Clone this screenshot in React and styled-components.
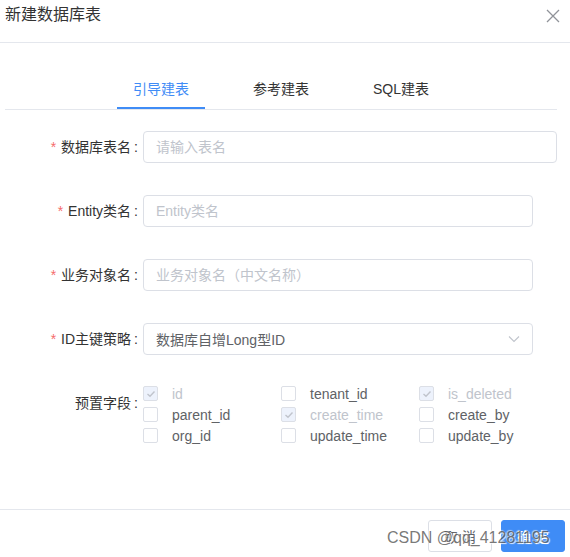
import styled, { createGlobalStyle } from "styled-components";

const GlobalStyle = createGlobalStyle`
  html, body {
    margin: 0;
    padding: 0;
    background: #fff;
  }
  body {
    font-family: "Liberation Sans", "Noto Sans CJK SC", sans-serif;
    color: #606266;
  }
  * { box-sizing: border-box; }
`;

const Dialog = styled.div`
  position: relative;
  width: 570px;
  height: 557px;
  display: flex;
  flex-direction: column;
  background: #fff;
`;

const Header = styled.div`
  height: 43px;
  border-bottom: 1px solid #e4e7ed;
  display: flex;
  justify-content: space-between;
  align-items: flex-start;
  padding: 5px 10px 0 5px;
`;

const Title = styled.span`
  font-size: 16px;
  line-height: 20px;
  color: #333;
`;

const Close = styled.button`
  border: none;
  background: none;
  padding: 0;
  margin-top: 4px;
  width: 14px;
  height: 14px;
  display: flex;
  cursor: pointer;
`;

const Body = styled.div`
  flex: 1;
  padding: 27px 13px 0 5px;
`;

const TabBar = styled.div`
  display: flex;
  justify-content: center;
  gap: 32px;
  border-bottom: 1px solid #e4e7ed;
  height: 40px;
`;

const Tab = styled.div`
  padding: 0 16px;
  line-height: 38px;
  font-size: 14px;
  color: ${(p) => (p.$active ? "#3f8cf6" : "#333")};
  border-bottom: 2px solid ${(p) => (p.$active ? "#3f8cf6" : "transparent")};
  cursor: pointer;
`;

const Form = styled.div`
  padding-top: 21px;
  display: flex;
  flex-direction: column;
  gap: 32px;
`;

const Row = styled.div`
  display: flex;
  align-items: ${(p) => (p.$top ? "flex-start" : "center")};
`;

const Label = styled.label`
  width: 138px;
  flex-shrink: 0;
  text-align: right;
  padding-right: 5px;
  font-size: 14px;
  line-height: ${(p) => (p.$tall ? "34px" : "32px")};
  margin-top: ${(p) => (p.$tall ? "-1px" : "0")};
  color: #333;
  white-space: nowrap;
`;

const Star = styled.span`
  color: #f56c6c;
  margin-right: 5px;
`;

const Colon = styled.span`
  margin-left: 3px;
`;

const Input = styled.input`
  width: ${(p) => p.$width}px;
  height: 32px;
  border: 1px solid #dcdfe6;
  border-radius: 4px;
  padding: 0 12px;
  font-family: inherit;
  font-size: 14px;
  color: #606266;
  outline: none;
  &::placeholder {
    color: #c0c4cc;
  }
`;

const Select = styled.div`
  width: 390px;
  height: 32px;
  border: 1px solid #dcdfe6;
  border-radius: 4px;
  padding: 0 12px;
  display: flex;
  align-items: center;
  justify-content: space-between;
  font-size: 14px;
  color: #606266;
`;

const CheckGrid = styled.div`
  display: grid;
  grid-template-columns: repeat(3, 138px);
  grid-auto-rows: 21px;
  margin-top: -4px;
`;

const Check = styled.label`
  display: flex;
  align-items: center;
  gap: 14px;
  font-size: 14px;
  color: ${(p) => (p.$disabled ? "#c0c4cc" : "#606266")};
`;

const Box = styled.span`
  width: 15px;
  height: 15px;
  border: 1px solid #dcdfe6;
  border-radius: 2px;
  background: ${(p) => (p.$disabled ? "#edf2fc" : "#fff")};
  display: flex;
  align-items: center;
  justify-content: center;
  flex-shrink: 0;
`;

const Footer = styled.div`
  height: 48px;
  border-top: 1px solid #e4e7ed;
  display: flex;
  justify-content: flex-end;
  align-items: flex-start;
  gap: 9px;
  padding: 10px 5px 0 0;
`;

const Button = styled.button`
  width: 64px;
  height: 32px;
  border-radius: 3px;
  font-family: inherit;
  font-size: 14px;
  cursor: pointer;
  border: 1px solid ${(p) => (p.$primary ? "#3f8cf6" : "#dcdfe6")};
  background: ${(p) => (p.$primary ? "#3f8cf6" : "#fff")};
  color: ${(p) => (p.$primary ? "#fff" : "#606266")};
`;

const Watermark = styled.div`
  position: absolute;
  left: 387px;
  top: 528px;
  font-size: 16px;
  line-height: 20px;
  color: rgba(85, 85, 85, 0.8);
  text-shadow: 1px 1px 1px rgba(255, 255, 255, 0.9), -1px -1px 1px rgba(255, 255, 255, 0.6);
  pointer-events: none;
  white-space: nowrap;
`;

const fields = [
  { name: "id", checked: true, disabled: true },
  { name: "tenant_id" },
  { name: "is_deleted", checked: true, disabled: true },
  { name: "parent_id" },
  { name: "create_time", checked: true, disabled: true },
  { name: "create_by" },
  { name: "org_id" },
  { name: "update_time" },
  { name: "update_by" },
];

const CloseIcon = () => (
  <svg width="14" height="14" viewBox="0 0 14 14">
    <path d="M1 1 L13 13 M13 1 L1 13" stroke="#909399" strokeWidth="1.3" fill="none" />
  </svg>
);

const Chevron = () => (
  <svg width="12" height="8" viewBox="0 0 12 8">
    <path d="M1 1.5 L6 6.5 L11 1.5" stroke="#c0c4cc" strokeWidth="1.1" fill="none" />
  </svg>
);

const Tick = () => (
  <svg width="10" height="8" viewBox="0 0 10 8">
    <path d="M1.5 4 L4 6.3 L8.5 1.5" stroke="#c0c4cc" strokeWidth="1.4" fill="none" />
  </svg>
);

const FieldLabel = ({ children }) => (
  <Label>
    <Star>*</Star>
    {children}
    <Colon>:</Colon>
  </Label>
);

export default function App() {
  return (
    <>
      <GlobalStyle />
      <Dialog>
        <Header>
          <Title>新建数据库表</Title>
          <Close aria-label="关闭">
            <CloseIcon />
          </Close>
        </Header>
        <Body>
          <TabBar>
            <Tab $active>引导建表</Tab>
            <Tab>参考建表</Tab>
            <Tab>SQL建表</Tab>
          </TabBar>
          <Form>
            <Row>
              <FieldLabel>数据库表名</FieldLabel>
              <Input $width={414} placeholder="请输入表名" />
            </Row>
            <Row>
              <FieldLabel>Entity类名</FieldLabel>
              <Input $width={390} placeholder="Entity类名" />
            </Row>
            <Row>
              <FieldLabel>业务对象名</FieldLabel>
              <Input $width={390} placeholder="业务对象名（中文名称）" />
            </Row>
            <Row>
              <FieldLabel>ID主键策略</FieldLabel>
              <Select>
                <span>数据库自增Long型ID</span>
                <Chevron />
              </Select>
            </Row>
            <Row $top>
              <Label $tall>预置字段<Colon>:</Colon></Label>
              <CheckGrid>
                {fields.map((f) => (
                  <Check key={f.name} $disabled={f.disabled}>
                    <Box $disabled={f.disabled}>{f.checked && <Tick />}</Box>
                    {f.name}
                  </Check>
                ))}
              </CheckGrid>
            </Row>
          </Form>
        </Body>
        <Footer>
          <Button>取 消</Button>
          <Button $primary>确 定</Button>
        </Footer>
        <Watermark>CSDN @qq_41281195</Watermark>
      </Dialog>
    </>
  );
}
